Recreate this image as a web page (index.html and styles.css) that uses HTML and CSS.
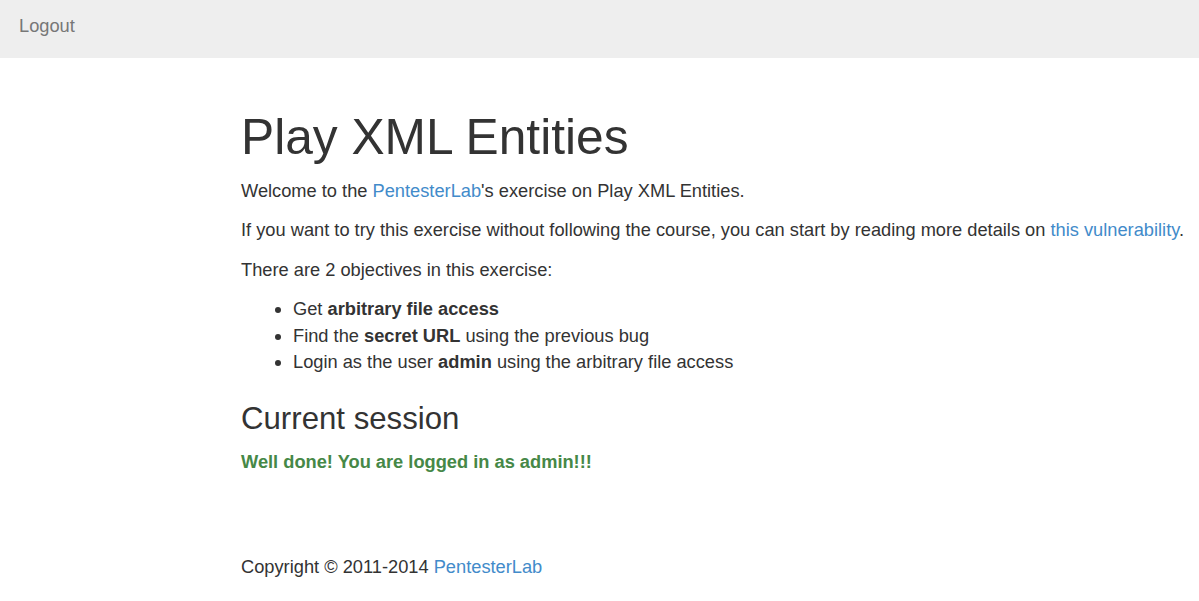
FILE: index.html
```html
<!DOCTYPE html>
<html lang="en">
<head>
<meta charset="utf-8">
<title>Play XML Entities</title>
<link rel="stylesheet" href="styles.css">
</head>
<body>
<nav class="navbar">
  <a class="nav-link" href="#">Logout</a>
</nav>
<main class="container">
  <h1 class="title">Play XML Entities</h1>
  <p>Welcome to the <a href="#">PentesterLab</a>'s exercise on Play XML Entities.</p>
  <p>If you want to try this exercise without following the course, you can start by reading more details on <a href="#">this vulnerability</a>.</p>
  <p>There are 2 objectives in this exercise:</p>
  <ul class="objectives">
    <li>Get <b>arbitrary file access</b></li>
    <li>Find the <b>secret URL</b> using the previous bug</li>
    <li>Login as the user <b>admin</b> using the arbitrary file access</li>
  </ul>
  <h3 class="section-title">Current session</h3>
  <p class="success">Well done! You are logged in as admin!!!</p>
</main>
<footer class="footer">
  <p>Copyright &copy; 2011-2014 <a href="#">PentesterLab</a></p>
</footer>
</body>
</html>
```
FILE: styles.css
```css
html, body {
  margin: 0;
  padding: 0;
}
body {
  font-family: "Liberation Sans", Arial, Helvetica, sans-serif;
  font-size: 18.25px;
  line-height: 26.5px;
  color: #333;
  background: #fff;
}
a {
  color: #428bca;
  text-decoration: none;
}
p {
  margin: 0 0 13px;
}
.navbar {
  height: 58px;
  background: #eeeeee;
  display: flex;
  align-items: flex-start;
  box-sizing: border-box;
  padding: 13px 19px 0;
}
.nav-link {
  color: #777;
}
.container {
  padding: 0 0 0 241px;
}
.title {
  font-size: 49.7px;
  font-weight: 500;
  line-height: 1.1;
  margin: 52px 0 13px;
}
.objectives {
  margin: 0 0 13px;
  padding-left: 52px;
}
.section-title {
  font-size: 31.2px;
  font-weight: 500;
  line-height: 1.1;
  margin: 26px 0 13.5px;
}
.success {
  color: #468847;
  font-weight: bold;
}
.footer {
  padding: 65px 0 0 241px;
}
```
